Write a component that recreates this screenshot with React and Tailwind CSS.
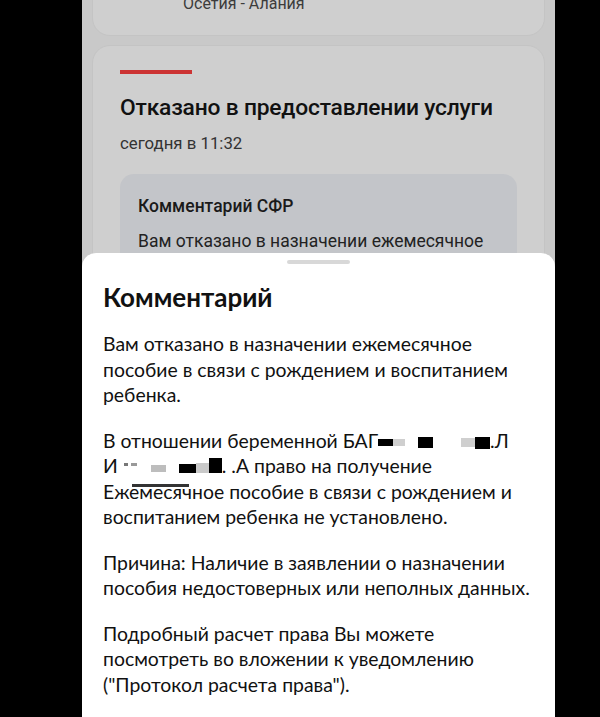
import React from "react";

const Blot = ({ w, h = 10, color = "bg-black", className = "" }) => (
  <span
    className={`inline-block align-middle ${color} ${className}`}
    style={{ width: w, height: h }}
  />
);

const App = () => {
  return (
    <div className="w-full h-[717px] bg-black flex overflow-hidden">
      <div className="relative ml-[82px] w-[473px] h-full bg-[#c9c9c9] overflow-hidden font-['Roboto',sans-serif]">
        <div className="flex flex-col gap-[9px] px-[10px]">
          <div className="-mt-[20px] h-[56px] rounded-[18px] bg-[#cfcfcf] border border-[#c4c4c4] pl-[90px] pt-[11px]">
            <span className="text-[16px] leading-[20px] text-[#3c3c3c]">Осетия - Алания</span>
          </div>

          <div className="rounded-[18px] bg-[#cfcfcf] border border-[#c4c4c4] pt-[24px] px-[27px] pb-6">
            <div className="w-[72px] h-[4px] bg-[#cc3333]" />
            <h2 className="mt-[20px] text-[22.8px] leading-[28px] font-medium text-[#111] tracking-[-0.2px] whitespace-nowrap">
              Отказано в предоставлении услуги
            </h2>
            <div className="mt-[10px] text-[16.8px] leading-[22px] text-[#333]">сегодня в 11:32</div>
            <div className="mt-[20px] rounded-[14px] bg-[#c3c5c9] px-[18px] pt-[21px] pb-8">
              <div className="text-[17.5px] leading-[22px] font-medium text-[#1a1a1a]">Комментарий СФР</div>
              <div className="mt-[12px] text-[17.5px] leading-[24px] text-[#222] whitespace-nowrap">
                Вам отказано в назначении ежемесячное
              </div>
            </div>
          </div>
        </div>

        {/* bottom sheet */}
        <div className="absolute left-0 right-0 top-[253px] bottom-0 bg-white rounded-t-[14px] font-['Lato',sans-serif] text-[#111]">
          <div className="flex justify-center pt-[7px]">
            <div className="w-[63px] h-[4px] rounded-full bg-[#d8d8d8]" />
          </div>
          <div className="px-[21px]">
            <h3 className="mt-[17px] text-[26px] leading-[32px] font-bold">Комментарий</h3>
            <div className="mt-[18px] flex flex-col gap-[20px] text-[19.4px] leading-[25.5px]">
              <p>
                Вам отказано в назначении ежемесячное пособие в связи с рождением и воспитанием
                ребенка.
              </p>
              <div>
                <div className="h-[25.5px] whitespace-nowrap">
                  В отношении беременной БАГ
                  <Blot w={15} h={7} />
                  <Blot w={12} h={7} color="bg-[#cfcfcf]" />
                  <span className="inline-block w-[13px]" />
                  <Blot w={15} h={11} />
                  <span className="inline-block w-[28px]" />
                  <Blot w={14} h={9} color="bg-[#cfcfcf]" />
                  <Blot w={15} h={12} />
                  .Л
                </div>
                <div className="h-[25.5px] whitespace-nowrap">
                  И<span className="inline-block w-[6px]" />
                  <Blot w={4} h={3} color="bg-[#777]" className="mr-[3px] -translate-y-[4px]" />
                  <Blot w={6} h={3} color="bg-[#999]" className="mr-[14px] -translate-y-[4px]" />
                  <Blot w={15} h={7} color="bg-[#bdbdbd]" />
                  <span className="inline-block w-[13px]" />
                  <Blot w={17} h={9} />
                  <Blot w={13} h={10} color="bg-[#c9c9c9]" />
                  <Blot w={13} h={15} className="-translate-y-[3px]" />
                  . .А право на получение
                </div>
                <div className="relative h-[25.5px] whitespace-nowrap">
                  Ежемесячное пособие в связи с рождением и
                  <span className="absolute left-[29px] top-[5px] w-[57px] h-[3px] bg-[#333]" />
                </div>
                <div className="h-[25.5px] whitespace-nowrap">воспитанием ребенка не установлено.</div>
              </div>
              <p>
                Причина: Наличие в заявлении о назначении пособия недостоверных или неполных
                данных.
              </p>
              <p>
                Подробный расчет права Вы можете посмотреть во вложении к уведомлению ("Протокол
                расчета права").
              </p>
            </div>
          </div>
        </div>
      </div>
    </div>
  );
};

export default App;
